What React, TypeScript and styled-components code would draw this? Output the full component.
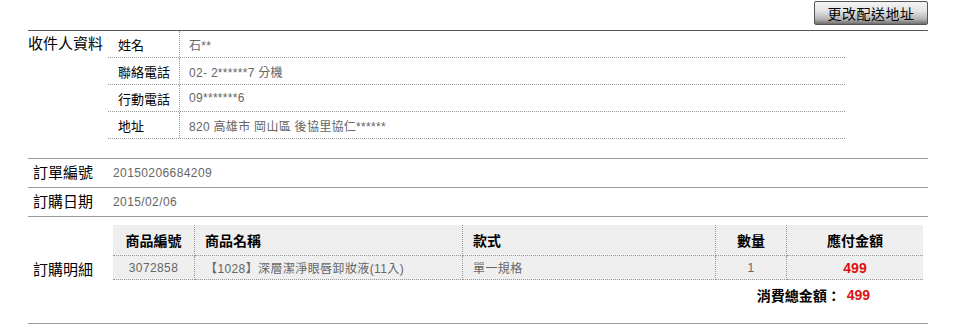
import styled, { createGlobalStyle } from "styled-components";

const GlobalStyle = createGlobalStyle`
  body {
    margin: 0;
    background: #fff;
    font-family: "Liberation Sans", "Noto Sans CJK TC", sans-serif;
    color: #000;
  }
`;

const Page = styled.div`
  width: 900px;
  margin-left: 28px;
`;

const TopBar = styled.div`
  height: 30px;
  display: flex;
  justify-content: flex-end;
  align-items: flex-start;
  padding-top: 1px;
  box-sizing: border-box;
`;

const ChangeButton = styled.button`
  width: 114px;
  height: 24px;
  padding: 0;
  border: 1px solid #555;
  border-radius: 2px;
  background: linear-gradient(#f4f4f4 0%, #e4e4e4 40%, #b4b4b4 78%, #6e6e6e 100%);
  font-family: "Noto Sans CJK TC", sans-serif;
  font-size: 14px;
  line-height: 22px;
  color: #000;
  letter-spacing: 0.5px;
`;

const Section = styled.div<{ $labelWidth: number; $dark?: boolean; $center?: boolean }>`
  display: grid;
  grid-template-columns: ${(p) => p.$labelWidth}px 1fr;
  align-items: ${(p) => (p.$center ? "center" : "start")};
  border-top: 1px solid ${(p) => (p.$dark ? "#555" : "#9a9a9a")};
`;

const SectionLabel = styled.div<{ $indent?: number }>`
  font-size: 15px;
  line-height: 26px;
  padding-left: ${(p) => p.$indent ?? 0}px;
  white-space: nowrap;
`;

const SimpleValue = styled.div`
  height: 28px;
  display: flex;
  align-items: center;
  font-size: 12px;
  letter-spacing: 0.4px;
  color: #666;
`;

const Recipient = styled.div`
  width: 737px;
  padding-bottom: 19px;
`;

const RecipientRow = styled.div`
  display: grid;
  grid-template-columns: 72px 1fr;
  height: 27px;
  border-bottom: 1px dotted #999;
  box-sizing: border-box;
`;

const FieldName = styled.div`
  display: flex;
  align-items: center;
  padding-left: 10px;
  font-size: 13px;
  border-right: 1px dotted #999;
`;

const FieldValue = styled.div`
  display: flex;
  align-items: center;
  padding-left: 9px;
  font-size: 12px;
  letter-spacing: 0.3px;
  color: #666;
`;

const Detail = styled.div`
  padding: 8px 0 17px;
`;

const Grid = styled.div`
  display: grid;
  grid-template-columns: 82px 268px 253px 71px 136px;
  width: 810px;
  background: #efefef;
`;

const HeadCell = styled.div<{ $align?: string; $last?: boolean }>`
  height: 31px;
  display: flex;
  align-items: center;
  justify-content: ${(p) => p.$align ?? "center"};
  padding-left: ${(p) => (p.$align ? "10px" : "0")};
  font-size: 14px;
  font-weight: bold;
  border-bottom: 1px dotted #999;
  border-right: ${(p) => (p.$last ? "none" : "1px dotted #999")};
  box-sizing: border-box;
`;

const Cell = styled.div<{ $align?: string; $last?: boolean; $pad?: number; $price?: boolean }>`
  height: 24px;
  display: flex;
  align-items: center;
  justify-content: ${(p) => p.$align ?? "center"};
  padding-left: ${(p) => p.$pad ?? 0}px;
  font-size: ${(p) => (p.$price ? "14px" : "12px")};
  font-weight: ${(p) => (p.$price ? "bold" : "normal")};
  letter-spacing: ${(p) => (p.$price ? "0" : "0.4px")};
  color: ${(p) => (p.$price ? "#dd1111" : "#666")};
  border-bottom: 1px dotted #999;
  border-right: ${(p) => (p.$last ? "none" : "1px dotted #999")};
  box-sizing: border-box;
`;

const Total = styled.div`
  display: flex;
  justify-content: flex-end;
  align-items: center;
  gap: 6px;
  padding: 4px 58px 0 0;
  height: 22px;
  font-size: 14px;
  font-weight: bold;
`;

const TotalPrice = styled.span`
  color: #dd1111;
`;

const recipient = [
  ["姓名", "石**"],
  ["聯絡電話", "02- 2******7 分機"],
  ["行動電話", "09*******6"],
  ["地址", "820 高雄市 岡山區 後協里協仁******"],
];

export default function App() {
  return (
    <>
      <GlobalStyle />
      <Page>
        <TopBar>
          <ChangeButton>更改配送地址</ChangeButton>
        </TopBar>

        <Section $labelWidth={80} $dark>
          <SectionLabel>收件人資料</SectionLabel>
          <Recipient>
            {recipient.map(([name, value]) => (
              <RecipientRow key={name}>
                <FieldName>{name}</FieldName>
                <FieldValue>{value}</FieldValue>
              </RecipientRow>
            ))}
          </Recipient>
        </Section>

        <Section $labelWidth={85} $center>
          <SectionLabel $indent={5}>訂單編號</SectionLabel>
          <SimpleValue>20150206684209</SimpleValue>
        </Section>

        <Section $labelWidth={85} $center>
          <SectionLabel $indent={5}>訂購日期</SectionLabel>
          <SimpleValue>2015/02/06</SimpleValue>
        </Section>

        <Section $labelWidth={85} $center>
          <SectionLabel $indent={5}>訂購明細</SectionLabel>
          <Detail>
            <Grid>
              <HeadCell>商品編號</HeadCell>
              <HeadCell $align="flex-start">商品名稱</HeadCell>
              <HeadCell $align="flex-start">款式</HeadCell>
              <HeadCell>數量</HeadCell>
              <HeadCell $last>應付金額</HeadCell>

              <Cell>3072858</Cell>
              <Cell $align="flex-start" $pad={10}>【1028】深層潔淨眼唇卸妝液(11入)</Cell>
              <Cell $align="flex-start" $pad={10}>單一規格</Cell>
              <Cell>1</Cell>
              <Cell $last $price>499</Cell>
            </Grid>
            <Total>
              消費總金額：<TotalPrice>499</TotalPrice>
            </Total>
          </Detail>
        </Section>
        <Section $labelWidth={85} />
      </Page>
    </>
  );
}
